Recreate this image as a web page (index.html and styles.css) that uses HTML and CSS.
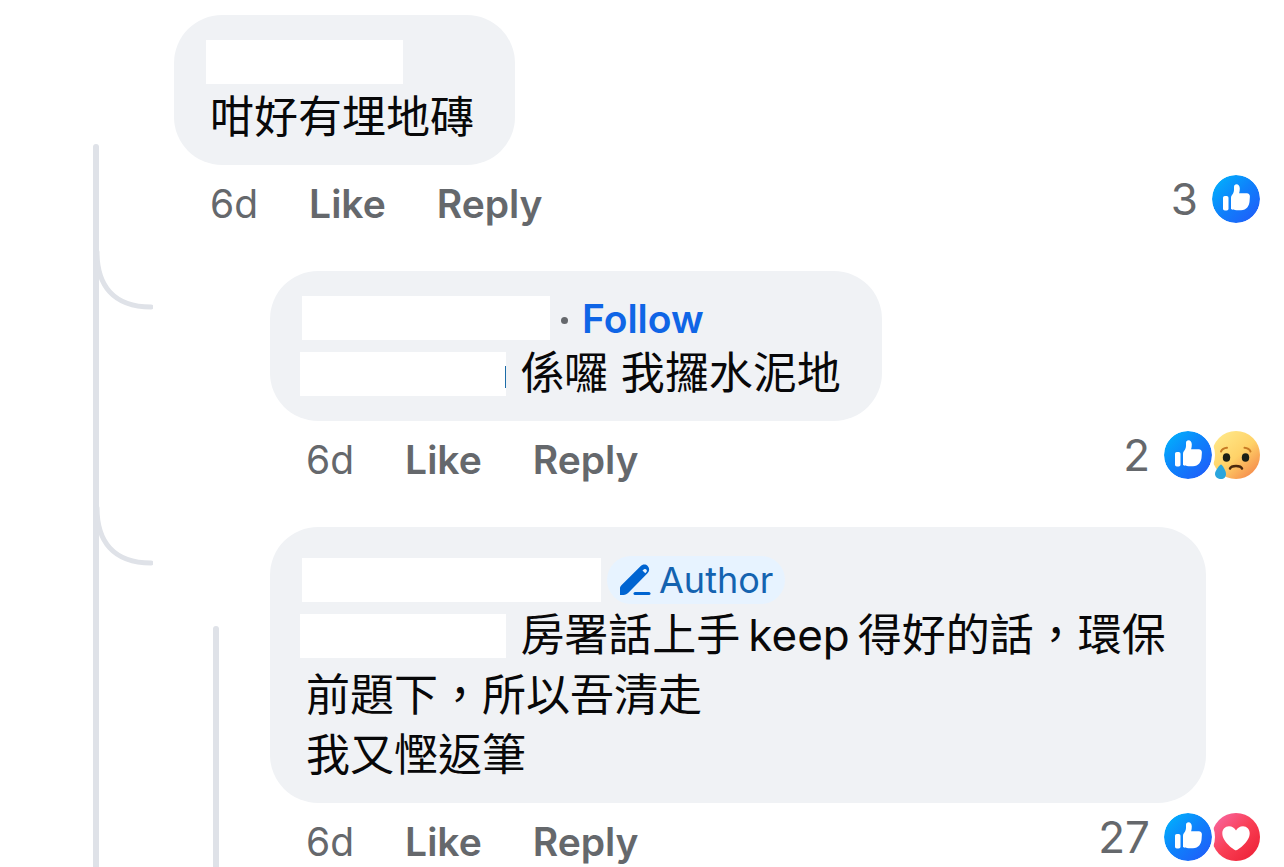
FILE: index.html
```html
<!DOCTYPE html>
<html lang="zh-Hant">
  <head>
    <meta charset="UTF-8" />
    <meta name="viewport" content="width=device-width, initial-scale=1.0" />
    <title>Comments</title>
    <link rel="stylesheet" href="styles.css">
  </head>
  <body>
    <!-- Shared icons -->
    <svg class="defs" width="0" height="0" aria-hidden="true">
      <defs>
        <linearGradient id="blue" x1="0.1" y1="0.1" x2="0.9" y2="0.9">
          <stop offset="0" stop-color="#02adfc" />
          <stop offset="0.5" stop-color="#0f80fb" />
          <stop offset="1" stop-color="#1f5ff9" />
        </linearGradient>
        <linearGradient id="red" x1="0.1" y1="0.1" x2="0.9" y2="0.9">
          <stop offset="0" stop-color="#f8639a" />
          <stop offset="0.5" stop-color="#f93f55" />
          <stop offset="1" stop-color="#ee2338" />
        </linearGradient>
        <linearGradient id="yellow" x1="0.2" y1="0.1" x2="0.9" y2="0.9">
          <stop offset="0" stop-color="#ffe584" />
          <stop offset="0.5" stop-color="#ffd268" />
          <stop offset="1" stop-color="#f58a4b" />
        </linearGradient>
        <symbol id="like" viewBox="0 0 48 48">
          <circle cx="24" cy="24" r="24" fill="url(#blue)" />
          <rect x="11" y="21" width="5.500" height="14.500" rx="1.800" fill="#fff" />
          <path
            d="M19 23c0-1.200.3-2 1-2.900 1.500-1.900 2-3.500 2-5.600V12c0-1.600 1-2.700 2.500-2.700 2 0 3.300 1.600 3.300 4.300 0 1.700-.2 3.200-.7 4.700h7.700c2 0 3.200 1.400 3.100 3.300l-.3 4.500c-.3 5-3 9.200-8.600 9.200h-4.500c-2.200 0-4-.4-5.500-1.200z"
            fill="#fff"
          />
        </symbol>
        <symbol id="love" viewBox="0 0 48 48">
          <circle cx="24" cy="24" r="24" fill="url(#red)" />
          <path
            d="M24 37.500c-1 0-13.700-8-13.700-17.200 0-4.100 2.900-7.100 6.700-7.100 3.200 0 5.600 1.700 7 4.300 1.400-2.600 3.800-4.300 7-4.300 3.800 0 6.700 3 6.700 7.100C37.700 29.500 25 37.500 24 37.500z"
            fill="#fff"
          />
        </symbol>
        <symbol id="sad" viewBox="0 0 48 48">
          <circle cx="24" cy="24" r="24" fill="url(#yellow)" />
          <g fill="none" stroke-linecap="round">
            <path d="M9 20.500c1-2.200 3.200-3.500 6-3.700M32.500 16.800c2.800.2 5 1.500 6 3.700" stroke="#c77a25" stroke-width="2" />
            <path d="M18 37.500c1.300-3.400 10.700-3.400 12 0" stroke="#4b280e" stroke-width="2.500" />
          </g>
          <ellipse cx="14.500" cy="26.500" rx="3.700" ry="4.300" fill="#1c2016" />
          <ellipse cx="33.500" cy="26.500" rx="3.700" ry="4.300" fill="#1c2016" />
          <path d="M9 33.500c1 0 5 6 5 9.200C14 46 12 48 9 48s-6-2-6-5.300c0-3.200 5-9.200 6-9.200z" fill="#2aa5dd" />
        </symbol>
        <symbol id="curve" viewBox="0 0 60 64">
          <path d="M4 5C4 38 20 60 58 60" fill="none" stroke="#dfe2e8" stroke-width="5" stroke-linecap="round" />
        </symbol>
      </defs>
    </svg>

    <main class="thread">
      <div class="rail"></div>
      <div class="comments">
        <article class="comment root">
          <div class="bubble">
            <header><span class="mask name-1"></span></header>
            <p>咁好有埋地磚</p>
          </div>
          <footer>
            <time>6d</time>
            <button type="button">Like</button>
            <button type="button">Reply</button>
            <div class="reactions">
              <span>3</span>
              <svg><use href="#like" /></svg>
            </div>
          </footer>
        </article>

        <div class="reply">
          <div class="gutter">
            <svg class="curve"><use href="#curve" /></svg>
          </div>
          <article class="comment">
            <div class="bubble">
              <header>
                <span class="mask name-2"></span>
                <span class="dot"></span>
                <a href="#">Follow</a>
              </header>
              <p><span class="mask mention clipped"></span> 係囉 我攞水泥地</p>
            </div>
            <footer>
              <time>6d</time>
              <button type="button">Like</button>
              <button type="button">Reply</button>
              <div class="reactions">
                <span>2</span>
                <svg><use href="#like" /></svg>
                <svg><use href="#sad" /></svg>
              </div>
            </footer>
          </article>
        </div>

        <div class="reply">
          <div class="gutter">
            <svg class="curve"><use href="#curve" /></svg>
            <div class="rail sub"></div>
          </div>
          <article class="comment">
            <div class="bubble long">
              <header>
                <span class="mask name-3"></span>
                <span class="badge">
                  <svg viewBox="0 0 32 32">
                    <path
                      d="M1 31v-6.500c0-1.300.5-2.400 1.400-3.300L21.500 2.300c2.200-2.200 5.200-2.200 7.200-.2s2 5-.2 7.200L9.600 28.600C8 30.200 6.500 31 4.500 31z"
                      fill="#0064d1"
                    />
                    <path d="M23.500 6.500l1.500-1.300c2-1 3.500.8 2.600 2.600l-1.300 1.500z" fill="#e7f3ff" />
                    <path d="M16 29.500h14" stroke="#0064d1" stroke-width="3" stroke-linecap="round" />
                  </svg>
                  Author
                </span>
              </header>
              <p>
                <span class="mask mention"></span> 房署話上手&thinsp;keep&thinsp;得好的話，環保前題下，所以吾清走<br />我又慳返筆
              </p>
            </div>
            <footer>
              <time>6d</time>
              <button type="button">Like</button>
              <button type="button">Reply</button>
              <div class="reactions">
                <span>27</span>
                <svg><use href="#like" /></svg>
                <svg><use href="#love" /></svg>
              </div>
            </footer>
          </article>
        </div>
      </div>
    </main>
  </body>
</html>
```
FILE: styles.css
```css
* {
  box-sizing: border-box;
}

body {
  margin: 0;
  height: 100vh;
  overflow: hidden;
  background: #fff;
  color: #080809;
  font-family: Inter, "Noto Sans CJK TC", sans-serif;
}

.defs {
  position: absolute;
}

.thread {
  display: flex;
  padding: 15px 24px 0 93px;
}

/* Thread lines */
.rail {
  flex: none;
  width: 6px;
  margin-top: 129px;
  border-radius: 3px;
  background: #dfe2e8;
}

.rail.sub {
  margin: 123px 0 0 60px;
}

.gutter {
  display: flex;
  flex: none;
  width: 177px;
  margin-left: -6px;
}

.curve {
  flex: none;
  width: 60px;
  height: 64px;
}

/* Comments */
.comments,
.reply .comment {
  flex: 1;
  min-width: 0;
}

.root {
  margin-left: 75px;
}

.reply {
  display: flex;
}

.reply .comment {
  padding-top: 24px;
}

.bubble {
  width: fit-content;
  max-width: calc(100% - 54px);
  padding: 18px 41px 18px 36px;
  border-radius: 48px;
  background: #f0f2f5;
}

.bubble.long {
  padding-right: 34px;
}

.bubble header {
  display: flex;
  align-items: center;
  height: 54px;
  padding-top: 4px;
}

.long header {
  height: 60px;
  padding-top: 10px;
}

.bubble p {
  margin: 0;
  font-size: 44px;
  line-height: 60px;
}

.bubble a {
  color: #0f65e6;
  font-size: 39px;
  font-weight: 600;
  text-decoration: none;
}

/* Hidden names */
.mask {
  display: inline-block;
  height: 44px;
  margin-left: -4px;
  background: #fff;
}

.name-1 {
  width: 197px;
}

.name-2 {
  width: 248px;
}

.name-3 {
  width: 299px;
}

.mention {
  width: 206px;
  margin: 0 2px 0 -6px;
  vertical-align: -7px;
}

.clipped {
  background: linear-gradient(#1c6ca8, #1c6ca8) right 14px / 1px 22px no-repeat #fff;
}

.dot {
  width: 7px;
  height: 7px;
  margin: 4px 14px 0 11px;
  border-radius: 50%;
  background: #65686c;
}

.badge {
  display: flex;
  align-items: center;
  gap: 8px;
  height: 48px;
  margin-left: 6px;
  padding: 0 12px;
  border-radius: 24px;
  background: #e7f3ff;
  color: #1463b0;
  font-size: 36px;
}

.badge svg {
  width: 32px;
  height: 32px;
}

/* Actions */
.comment footer {
  display: flex;
  align-items: center;
  gap: 51px;
  height: 48px;
  margin: 10px 0 24px 36px;
  color: #65686c;
  font-size: 39px;
}

.comment time,
.comment button {
  padding: 8px 0 0;
}

.comment button {
  border: 0;
  background: none;
  color: inherit;
  font: inherit;
  font-weight: 600;
  cursor: pointer;
}

.reactions {
  display: flex;
  align-items: center;
  margin-left: auto;
  font-size: 44px;
}

.reactions span {
  margin-right: 14px;
}

.reactions svg {
  width: 48px;
  height: 48px;
}

.reactions svg:nth-of-type(1) {
  z-index: 1;
  border-radius: 50%;
  box-shadow: 0 0 0 3px #fff;
}
```
